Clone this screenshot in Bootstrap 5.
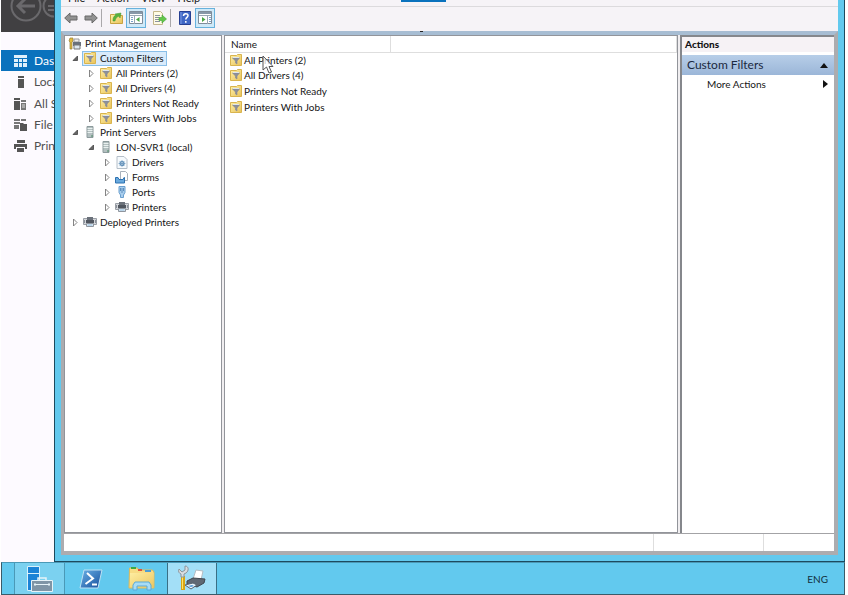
<!DOCTYPE html>
<html lang="en">
<head>
<meta charset="utf-8">
<meta name="viewport" content="width=device-width, initial-scale=1">
<title>Print Management</title>
<link href="https://cdn.jsdelivr.net/npm/bootstrap@5.3.0/dist/css/bootstrap.min.css" rel="stylesheet">
<style>
body{font-family:Lato,"Open Sans",sans-serif;font-size:10px;line-height:12px;color:#1c1c1c;background:#fff}
button{border:0;background:none;padding:0;color:inherit;font:inherit}
svg{flex:none;display:block}
.desk{padding:0 3px 0 1px}
.server-nav{width:53px;background:#fdfaff}
.server-head{height:32px;background:#414042}
.server-links{height:107px;margin-top:18px;font-size:12px}
.server-links a{color:#505050;text-decoration:none;white-space:nowrap;padding-left:12px;gap:6px}
.server-links a.current{background:#0a72bd;color:#fff}
.win{border:solid #1d4a5e;border-width:0 1px 1px;background:#62c9ee;padding:0 6px 6px}
.menus{height:7px;background:#f6f3f7;border-bottom:1px solid #dcdadd;gap:12px;padding:0 7px 2px;font-size:11px}
.menus button{line-height:13px}
.tools{height:24px;background:#f6f3f7;padding:0 0 3px}
.tools button{width:20px;height:20px;display:flex;align-items:center;justify-content:center}
.tools .pressed{border:1px solid #67b1dc;background:#cfe9f8}
.tools .rule{width:1px;height:18px;background:#aaa8ab}
.frame{border:solid #acacaf;border-width:4px 4px 4px 3px;border-top-color:#a7bdd3;background:#f0eef0;color:#151515}
.panes{gap:2px}
.pane{background:#fff;border:1px solid #92949a}
.tree-pane{width:158px}
.tree{height:193px}
.tree li{gap:3px;padding-left:3px;white-space:nowrap;flex:1 1 0;min-height:0}
.tree .d1{padding-left:5px}
.tree .d2{padding-left:21px}
.tree .d3{padding-left:37px}
.tree .lbl{gap:4px;padding:0 2px 0 1px}
.tree .tight{gap:3px;padding-left:0}
.tree .picked{border:1px solid #8abfe8;background:#d9ebfb;height:15px;padding:0 2px 0 1px;margin-left:-1px}
.twist{width:10px;height:10px}
.items{table-layout:fixed}
.items th{font-weight:400;height:16px;padding:0 6px;border-bottom:1px solid #dedede;border-right:1px solid #dedede}
.items td{height:16px;padding:0 5px;vertical-align:top}
.items .namecol{width:165px}
.item{gap:2px;line-height:14px}
.actions-pane{width:154px;border-width:2px 0 0 2px;border-color:#85878c}
.actions-title{font-size:10px;line-height:15px;background:#f6f2f5;font-weight:900;padding-left:3px;margin:0 0 3px}
.section-bar{height:20px;font-size:12px;color:#1b2940;background:linear-gradient(#b7cee8,#9bb6d8);padding:0 6px 0 5px}
.more-row{height:18px;padding:0 6px 0 25px}
.status{height:18px;background:#fff;border-top:1px solid #a3a3a6}
.status .slot{border-left:1px solid #dedede}
.slot-a{width:110px}.slot-b{width:71px}
.taskbar{height:33px;background:#62c9ee;border:1px solid #3a5b69;border-top-color:#4a99b7;padding-left:12px}
.taskbar button{width:51px;display:flex;align-items:center;justify-content:center}
.taskbar .running{background:#7bd1f0;border:solid #4a99b7;border-width:0 1px}
.taskbar .front{background:#a3dff7;border:solid #3a6f85;border-width:0 1px;width:50px}
.lang{font-size:10px;padding-right:16px;color:#12303c}
.title-chip{width:45px;height:2px;left:400px;top:0;background:#0a72bd}
.title-tick{width:3px;height:1px;left:419px;top:31px;background:#222}
.pointer{left:261px;top:55px}
</style>
<script src="https://cdn.jsdelivr.net/npm/bootstrap@5.3.0/dist/js/bootstrap.bundle.min.js"></script>
</head>
<body>
<svg width="0" height="0" class="position-absolute" aria-hidden="true">
<linearGradient id="gold" x2="1" y2="1"><stop stop-color="#fff1a8"/><stop offset="1" stop-color="#e8c25a"/></linearGradient>
<linearGradient id="blue" x2="1" y2="1"><stop stop-color="#6ab0e6"/><stop offset="1" stop-color="#174f9c"/></linearGradient>
<symbol id="filter" viewBox="0 0 12 12"><path d="M.5 1.500h6l1-1h4v11H.5z" fill="url(#gold)" stroke="#d9b44e"/><path d="M2.500 4h7L7 7v3l-1.500-1V7z" fill="#8d9099" stroke="#858893" stroke-width=".6"/><path d="M3 3.500h6" stroke="#dde5ee"/></symbol>
<symbol id="open" viewBox="0 0 10 10"><path d="M7.500 3v4.500H3z" fill="#666" stroke="#444" stroke-width=".8"/></symbol>
<symbol id="shut" viewBox="0 0 10 10"><path d="M3.500 2v7L7 5.500z" fill="#fff" stroke="#777" stroke-width=".9"/></symbol>
<symbol id="server" viewBox="0 0 12 12"><path d="M3 .5h6v11H3z" fill="#b3c0c0" stroke="#8c9a9c"/><path d="M3.500 2.500h5M3.500 4.500h5M3.500 6.500h5" stroke="#e9f0ef"/><path d="M8 9v2" stroke="#4d8a66"/></symbol>
<symbol id="printer" viewBox="0 0 14 11"><path d="M.5 2.500h13v6H.5z" fill="#d3d6da" stroke="#9a9fa6"/><path d="M4 1h6v3H4z" fill="#6b717a"/><path d="M3 4h8v3H3z" fill="#50565f"/><path d="M1.500 4v3M12.500 4v3" stroke="#8a9099"/><path d="M3.500 7.500h7v3h-7z" fill="#e5edf4" stroke="#8f959d"/><path d="M4.500 9h5" stroke="#8dbde0"/></symbol>
</svg>

<div class="desk vh-100 d-flex flex-column overflow-hidden">
<div class="d-flex flex-fill position-relative overflow-hidden">
<nav class="server-nav flex-shrink-0 overflow-hidden" aria-label="Server Manager">
<div class="server-head overflow-hidden"><svg width="53" height="32" fill="none" stroke="#6a696c" stroke-width="2"><circle cx="25" cy="6" r="14.500"/><path d="M34 6H17M24-1l-7 7 7 7" stroke-width="3"/><circle cx="53" cy="6" r="10.500"/><path d="M47 6h8M47 10h8" /></svg></div>
<div class="server-links d-flex flex-column">
<a href="#" class="current d-flex align-items-center flex-fill"><svg width="15" height="14"><path d="M1 1h13v3H1zM1 5h4v3H1zM6 5h3v3H6zM10 5h4v3h-4zM1 9h4v4H1zM6 9h3v4H6zM10 9h4v4h-4z" fill="#dff0fb"/></svg>Dashboard</a>
<a href="#" class="d-flex align-items-center flex-fill"><svg width="15" height="14"><path d="M5 1h6v2H5zM5 4h6v9H5z" fill="#555"/></svg>Local Server</a>
<a href="#" class="d-flex align-items-center flex-fill"><svg width="15" height="14"><path d="M1 1h6v2H1zM1 4h6v9H1z" fill="#555"/><path d="M8 3h5v2H8zM8 6h5v7H8z" fill="#777"/><path d="M9 8h3M9 10h3" stroke="#ddd"/></svg>All Servers</a>
<a href="#" class="d-flex align-items-center flex-fill"><svg width="15" height="14"><path d="M1 1h6v2H1zM1 4h6v2H1zM1 7h5v4H1zM8 1h5v2H8z" fill="#777"/><path d="M7 5h3l1 1h3v7H7z" fill="#555"/></svg>File and Storage Services</a>
<a href="#" class="d-flex align-items-center flex-fill"><svg width="15" height="14"><path d="M4 1h8v3H4zM1 5h13v5h-2V8H3v2H1zM4 9h7v4H4z" fill="#555"/></svg>Print Services</a>
</div>
</nav>

<main class="win flex-fill d-flex flex-column">
<div class="menus d-flex align-items-end overflow-hidden"><button type="button">File</button><button type="button">Action</button><button type="button">View</button><button type="button">Help</button></div>
<div class="tools d-flex align-items-center flex-shrink-0">
<button type="button" aria-label="Back"><svg width="14" height="12"><path d="M.7 6L6 1v3h7v4H6v3z" fill="#929292" stroke="#686868"/></svg></button>
<button type="button" aria-label="Forward"><svg width="14" height="12"><path d="M13.300 6L8 1v3H1v4h7v3z" fill="#929292" stroke="#686868"/></svg></button>
<span class="rule me-1"></span>
<button type="button" aria-label="Up one level"><svg width="13" height="13"><path d="M.5 3.500h4l1 1h7v8H.5z" fill="url(#gold)" stroke="#c9a240"/><path d="M3 10c0-4 1-5 3-6L5 3l6-1-1 5-1-2C7 6 5.500 7 5 10z" fill="#58b23c" stroke="#3e9230" stroke-width=".5"/></svg></button>
<button type="button" class="pressed" aria-label="Show console tree"><svg width="14" height="13"><path d="M.5.5h13v12H.5z" fill="#fff" stroke="#7f8c99"/><path d="M1 2h12" stroke="#8798a8" stroke-width="2"/><path d="M1 4.500h12M5.500 4v9" stroke="#9aa8b4"/><path d="M2 6.500h2M2 8.500h2M2 10.500h2" stroke="#7ba2c9"/><path d="M10.500 6v5L7 8.500z" fill="#49a744"/></svg></button>
<button type="button" class="ms-1" aria-label="Export list"><svg width="14" height="14"><path d="M.5.5h7l2 2v11h-9z" fill="#fffbe5" stroke="#c2b68b"/><path d="M2 4.500h5M2 6.500h4M2 8.500h4M2 10.500h5" stroke="#8a91a0"/><path d="M6 6.500h3V4l4.500 4L9 12V9.500H6z" fill="#63c64a" stroke="#43a336" stroke-width=".6"/></svg></button>
<span class="rule me-1"></span>
<button type="button" aria-label="Help"><svg width="12" height="14"><path d="M.5.5h11v13H.5z" fill="#3f66c5" stroke="#263f92"/><path d="M2 1v12" stroke="#7a99e4"/><path d="M4.500 5c0-3 4.500-3 4.500-.5C9 6.500 6.800 6.300 6.800 8.500M6.800 10v1.700" fill="none" stroke="#fff" stroke-width="1.500"/></svg></button>
<button type="button" class="pressed" aria-label="Show action pane"><svg width="14" height="13"><path d="M.5.5h13v12H.5z" fill="#fff" stroke="#7f8c99"/><path d="M1 2h12" stroke="#8798a8" stroke-width="2"/><path d="M1 4.500h12M9.500 4v9" stroke="#9aa8b4"/><path d="M11 6.500h2M11 8.500h2M11 10.500h2" stroke="#7ba2c9"/><path d="M4 6v5l3.500-2.500z" fill="#49a744"/></svg></button>
</div>

<div class="frame flex-fill d-flex flex-column">
<div class="panes d-flex flex-fill">
<section class="pane tree-pane flex-shrink-0">
<ul class="tree list-unstyled mb-0 d-flex flex-column">
<li class="d-flex align-items-center"><svg width="14" height="13"><path d="M2 1h3v3l-1 1v7H2V5L1 4z" fill="#e3bc3d" stroke="#937b3a" stroke-width=".7"/><path d="M6 2h5v3H6z" fill="#eee" stroke="#999"/><path d="M5 5h8v4H5z" fill="#68717c"/><path d="M6 8h6v4H6z" fill="#dce8f2" stroke="#777"/></svg>Print Management</li>
<li class="d1 d-flex align-items-center"><svg class="twist"><use href="#open"/></svg><span class="lbl picked d-flex align-items-center"><svg width="12" height="12"><use href="#filter"/></svg>Custom Filters</span></li>
<li class="d2 d-flex align-items-center"><svg class="twist"><use href="#shut"/></svg><span class="lbl d-flex align-items-center"><svg width="12" height="12"><use href="#filter"/></svg>All Printers (2)</span></li>
<li class="d2 d-flex align-items-center"><svg class="twist"><use href="#shut"/></svg><span class="lbl d-flex align-items-center"><svg width="12" height="12"><use href="#filter"/></svg>All Drivers (4)</span></li>
<li class="d2 d-flex align-items-center"><svg class="twist"><use href="#shut"/></svg><span class="lbl d-flex align-items-center"><svg width="12" height="12"><use href="#filter"/></svg>Printers Not Ready</span></li>
<li class="d2 d-flex align-items-center"><svg class="twist"><use href="#shut"/></svg><span class="lbl d-flex align-items-center"><svg width="12" height="12"><use href="#filter"/></svg>Printers With Jobs</span></li>
<li class="d1 d-flex align-items-center"><svg class="twist"><use href="#open"/></svg><span class="lbl d-flex align-items-center"><svg width="12" height="12"><use href="#server"/></svg>Print Servers</span></li>
<li class="d2 d-flex align-items-center"><svg class="twist"><use href="#open"/></svg><span class="lbl d-flex align-items-center"><svg width="12" height="12"><use href="#server"/></svg>LON-SVR1 (local)</span></li>
<li class="d3 d-flex align-items-center"><svg class="twist"><use href="#shut"/></svg><span class="lbl d-flex align-items-center"><svg width="12" height="13"><path d="M1 .5h7l3 3v9H1z" fill="#f6fafd" stroke="#b4bec8"/><circle cx="6" cy="7.500" r="2" fill="none" stroke="#5f8fb8" stroke-width="1.200"/><path d="M6 4v7M2.500 7.500h7M3.500 5l5 5M8.500 5l-5 5" stroke="#5f8fb8" stroke-width=".6"/></svg>Drivers</span></li>
<li class="d3 d-flex align-items-center"><svg class="twist"><use href="#shut"/></svg><span class="lbl tight d-flex align-items-center"><svg width="14" height="13"><path d="M5.500.5h5l2 2v7h-7z" fill="#fff" stroke="#a9b2bc"/><path d="M.5 6.500h2.500l1 2h4l1-2h.5V12H.5z" fill="#69a9dd" stroke="#2f72b1"/></svg>Forms</span></li>
<li class="d3 d-flex align-items-center"><svg class="twist"><use href="#shut"/></svg><span class="lbl d-flex align-items-center"><svg width="12" height="12"><path d="M3 .5h6v6L7.500 9v2.500h-3V9L3 6.500z" fill="#a9ceee" stroke="#6a9fce"/><path d="M4.500 2v3M6 2v5M7.500 2v3" stroke="#3d73a7" stroke-width=".7"/></svg>Ports</span></li>
<li class="d3 d-flex align-items-center"><svg class="twist"><use href="#shut"/></svg><span class="lbl tight d-flex align-items-center"><svg width="14" height="11"><use href="#printer"/></svg>Printers</span></li>
<li class="d1 d-flex align-items-center"><svg class="twist"><use href="#shut"/></svg><span class="lbl tight d-flex align-items-center"><svg width="14" height="11"><use href="#printer"/></svg>Deployed Printers</span></li>
</ul>
</section>
<section class="pane flex-fill">
<table class="items w-100">
<thead><tr><th class="namecol" scope="col">Name</th><th scope="col" aria-label="Details"></th></tr></thead>
<tbody>
<tr><td><div class="item d-flex align-items-center"><svg width="12" height="12"><use href="#filter"/></svg>All Printers (2)</div></td><td></td></tr>
<tr><td><div class="item d-flex align-items-center"><svg width="12" height="12"><use href="#filter"/></svg>All Drivers (4)</div></td><td></td></tr>
<tr><td><div class="item d-flex align-items-center"><svg width="12" height="12"><use href="#filter"/></svg>Printers Not Ready</div></td><td></td></tr>
<tr><td><div class="item d-flex align-items-center"><svg width="12" height="12"><use href="#filter"/></svg>Printers With Jobs</div></td><td></td></tr>
</tbody></table>
</section>
<aside class="pane actions-pane flex-shrink-0">
<h2 class="actions-title">Actions</h2>
<button type="button" class="section-bar w-100 d-flex align-items-center justify-content-between">Custom Filters<svg width="8" height="5"><path d="M0 5l4-5 4 5z" fill="#111"/></svg></button>
<button type="button" class="more-row w-100 d-flex align-items-center justify-content-between">More Actions<svg width="5" height="8"><path d="M0 0l5 4-5 4z" fill="#111"/></svg></button>
</aside>
</div>
<div class="status d-flex justify-content-end"><span class="slot slot-a"></span><span class="slot slot-b"></span></div>
</div>
</main>
<span class="title-chip position-absolute"></span>
<span class="title-tick position-absolute"></span>
<svg class="pointer position-absolute" width="12" height="19"><path d="M1 1v14l3.500-3 2.500 6 2.500-1L7 11.500h4z" fill="#fff" fill-opacity=".75" stroke="#555"/></svg>
</div>

<footer class="taskbar d-flex align-items-stretch flex-shrink-0">
<button type="button" class="running" aria-label="Server Manager"><svg width="28" height="28"><path d="M1.500 1.500h12v24h-12z" fill="#1b83d6" stroke="#d9f1fb"/><path d="M1 8.500h13" stroke="#d9f1fb"/><path d="M12 15v-2h8v2" fill="none" stroke="#e6f3f8" stroke-width="1.500"/><path d="M5.500 15.500h21v11h-21z" fill="#7f95a6" stroke="#e6f3f8"/><path d="M8 19.500h16" stroke="#e6f3f8"/><path d="M9 18v3M23 18v3" stroke="#e6f3f8"/></svg></button>
<button type="button" aria-label="PowerShell"><svg width="24" height="20"><path d="M5 1h18l-4 18H1z" fill="url(#blue)" stroke="#bfe2f4"/><path d="M8 4l6 5.500L6.500 15M13 15.500h5" fill="none" stroke="#fff" stroke-width="2"/></svg></button>
<button type="button" aria-label="File Explorer"><svg width="28" height="26"><path d="M1.500 2h8l1 2h14l1.500 2v16h-25z" fill="#f8dc83" stroke="#dcb95b"/><path d="M3 2h5" stroke="#39a845" stroke-width="2"/><path d="M10 4h4" stroke="#e0533c" stroke-width="2"/><path d="M17 5h6" stroke="#4b9ed6" stroke-width="2"/><path d="M2 7h24v14H2z" fill="url(#gold)" opacity=".8"/><path d="M5 24v-5l2-3h14l2 3v5h-4v-4H9v4z" fill="#a8dcf5" stroke="#5ba9d8"/></svg></button>
<button type="button" class="front" aria-label="Print Management"><svg width="28" height="28"><path d="M5 11v14" stroke="#d7a515" stroke-width="4"/><path d="M4.500 12v12" stroke="#ffe267"/><path d="M1 4l3 3 3-2V1c4 0 4 5 1 7L6 9v3H3V9C1 8 0 7 1 4z" fill="#d9dde0" stroke="#8c959c"/><path d="M15 14l3-9 7 1-2 9z" fill="#fff" stroke="#b4bcc3"/><path d="M9 16l6-3 12 1-1 4-7 4-10-3z" fill="#606873" stroke="#3f464f"/><path d="M7 20l8-2 4 2-6 4z" fill="#eaf4fb" stroke="#58636e"/><path d="M10 21l4-1 2 1-3 1z" fill="#4f97d5"/></svg></button>
<span class="lang ms-auto align-self-center">ENG</span>
</footer>
</div>
</body>
</html>
